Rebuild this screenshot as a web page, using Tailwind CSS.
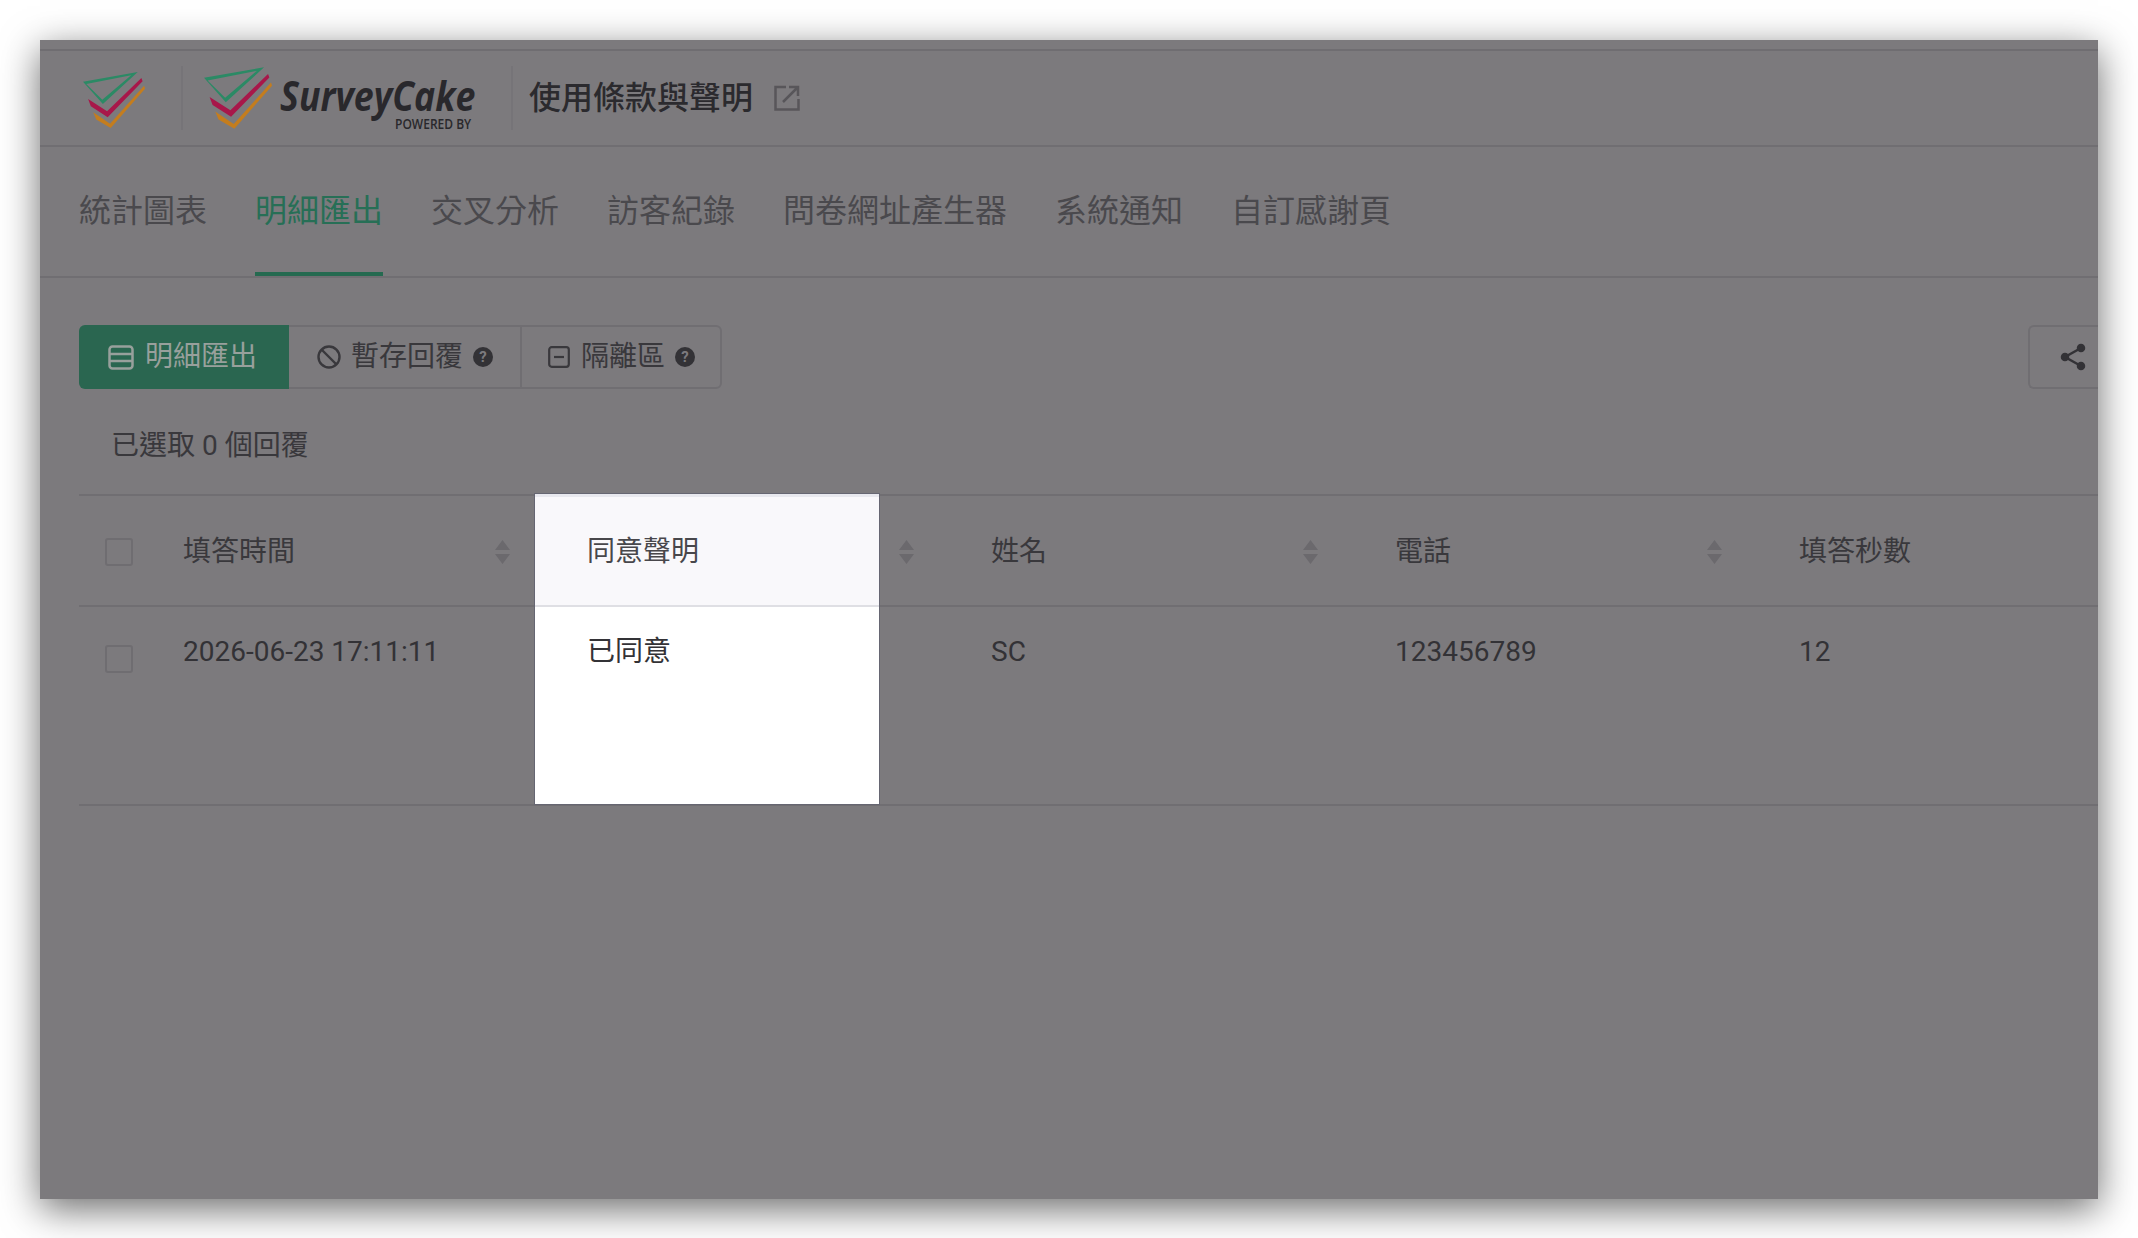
<!DOCTYPE html>
<html lang="zh-Hant">
<head>
    <meta charset="UTF-8">
    <title>使用條款與聲明</title>
    <script src="https://cdn.jsdelivr.net/npm/@tailwindcss/browser@4"></script>
</head>
<body class="w-[2138px] h-[1238px] overflow-hidden bg-white pt-[40px] pl-[40px] font-['Roboto','Noto_Sans_CJK_TC',sans-serif] text-[#39383c]">

    <svg class="hidden">
        <symbol id="logo-mark" viewBox="0 0 206 186">
            <path fill="#2b8a65" fill-rule="evenodd" d="M0 32 L182 0 L66 106 Z M11 40 L64 92 L160 11 Z"/>
            <path fill="#a8174a" d="M17 90 L80 130 L194 20 L198 31 L82 150 L26 114 Z"/>
            <path fill="#c47d1e" d="M34 134 L90 172 L203 46 L206 56 L92 186 L44 158 Z"/>
        </symbol>
    </svg>

    <div class="w-[2058px] h-[1159px] flex flex-col overflow-hidden bg-[#7c7a7d] shadow-[0_10px_36px_rgba(0,0,0,0.58)]">

        <div class="h-[11px] shrink-0 border-b-2 border-[#6f6d71]"></div>

        <!-- header -->
        <div class="h-[96px] shrink-0 flex items-center border-b-2 border-[#706e72] pl-[43px]">
            <svg class="w-[62px] h-[58px] shrink-0 mt-[4px]"><use href="#logo-mark"/></svg>
            <div class="w-[2px] h-[64px] ml-[36px] bg-[#767478]"></div>
            <svg class="w-[68px] h-[64px] ml-[21px] shrink-0 -mt-[1px]"><use href="#logo-mark"/></svg>
            <div class="relative w-[195px] h-[70px] ml-[8px] shrink-0">
                <span class="absolute left-0 top-[14px] origin-left scale-x-[0.85] font-['Open_Sans'] italic font-bold text-[42px] leading-[36px] text-[#29282c] whitespace-nowrap">SurveyCake</span>
                <span class="absolute right-[4px] top-[51px] origin-right scale-x-[0.8] font-['Open_Sans'] font-semibold text-[15px] leading-[18px] text-[#29282c] whitespace-nowrap">POWERED BY</span>
            </div>
            <div class="w-[2px] h-[64px] ml-[36px] bg-[#767478]"></div>
            <h1 class="ml-[16px] text-[32px] font-medium leading-none text-[#2b2a2e]">使用條款與聲明</h1>
            <svg class="w-[26px] h-[26px] ml-[21px]" viewBox="0 0 26 26" fill="none" stroke="#58565a" stroke-width="2.5">
                <path d="M12 2 H1.5 V24.5 H24.5 V14"/>
                <path d="M9 17 L23 3 M15 2 H24 V11"/>
            </svg>
        </div>

        <!-- tabs -->
        <div class="h-[131px] shrink-0 flex gap-[48px] border-b-2 border-[#706e72] pl-[39px] text-[32px] text-[#4a494d]">
            <div class="flex items-center pb-[2px]">統計圖表</div>
            <div class="flex items-center pt-[2px] border-b-4 border-[#256a50] text-[#276f56]">明細匯出</div>
            <div class="flex items-center pb-[2px]">交叉分析</div>
            <div class="flex items-center pb-[2px]">訪客紀錄</div>
            <div class="flex items-center pb-[2px]">問卷網址產生器</div>
            <div class="flex items-center pb-[2px]">系統通知</div>
            <div class="flex items-center pb-[2px]">自訂感謝頁</div>
        </div>

        <!-- toolbar -->
        <div class="flex justify-between pl-[39px] pt-[47px] text-[28px]">
            <div class="flex h-[64px]">
                <div class="w-[210px] flex items-center bg-[#2a6650] rounded-l-md pl-[29px] text-[#98a09c]">
                    <svg class="w-[26px] h-[25px]" viewBox="0 0 26 25" fill="none" stroke="#98a09c" stroke-width="2.5">
                        <rect x="1.5" y="1.5" width="23" height="22" rx="3"/>
                        <path d="M1.5 9 H24.5 M1.5 16 H24.5"/>
                    </svg>
                    <span class="ml-[11px]">明細匯出</span>
                </div>
                <div class="w-[231px] flex items-center border-y-2 border-[#706e72] pl-[28px]">
                    <svg class="w-[24px] h-[24px]" viewBox="0 0 24 24" fill="none" stroke="#39383c" stroke-width="2.4">
                        <circle cx="12" cy="12" r="10.5"/>
                        <path d="M5 5 L19 19"/>
                    </svg>
                    <span class="ml-[10px]">暫存回覆</span>
                    <span class="ml-[10px] w-[20px] h-[20px] rounded-full bg-[#333236] text-[#7c7a7e] text-[15px] font-bold flex items-center justify-center">?</span>
                </div>
                <div class="w-[202px] flex items-center border-y-2 border-r-2 border-l-2 border-[#706e72] rounded-r-md pl-[26px]">
                    <svg class="w-[22px] h-[22px]" viewBox="0 0 22 22" fill="none" stroke="#39383c" stroke-width="2.2">
                        <rect x="1.2" y="1.2" width="19.6" height="19.6" rx="2.5"/>
                        <path d="M6 11 H16"/>
                    </svg>
                    <span class="ml-[11px]">隔離區</span>
                    <span class="ml-[10px] w-[20px] h-[20px] rounded-full bg-[#333236] text-[#7c7a7e] text-[15px] font-bold flex items-center justify-center">?</span>
                </div>
            </div>
            <div class="w-[70px] h-[64px] flex items-center border-y-2 border-l-2 border-[#706e72] rounded-l-md pl-[30px]">
                <svg class="w-[26px] h-[28px]" viewBox="0 0 26 28" fill="#333236" stroke="#333236" stroke-width="2.5">
                    <path d="M21 5 L5 14 L21 23" fill="none"/>
                    <circle cx="21" cy="5" r="3"/>
                    <circle cx="5" cy="14" r="3"/>
                    <circle cx="21" cy="23" r="3"/>
                </svg>
            </div>
        </div>

        <div class="h-[40px] mt-[37px] pl-[71px] text-[28px] leading-[40px]">已選取 0 個回覆</div>

        <!-- table -->
        <div class="relative ml-[39px] mt-[28px] text-[28px]">
            <div class="grid grid-cols-[51px_404px_404px_404px_404px_1fr] h-[113px] pt-[2px] items-center border-y-2 border-[#706e72]">
                <div class="pl-[26px]"><div class="w-[28px] h-[28px] border-2 border-[#6f6d71] rounded-[3px]"></div></div>
                <div class="flex items-center justify-between pl-[53px] pr-[23px]">填答時間
                    <svg class="w-[17px] h-[24px]" viewBox="0 0 17 24" fill="#6b696d"><path d="M8.5 0 L16 10 H1 Z M8.5 24 L1 14 H16 Z"/></svg>
                </div>
                <div class="flex items-center justify-end pr-[23px]">
                    <svg class="w-[17px] h-[24px]" viewBox="0 0 17 24" fill="#6b696d"><path d="M8.5 0 L16 10 H1 Z M8.5 24 L1 14 H16 Z"/></svg>
                </div>
                <div class="flex items-center justify-between pl-[53px] pr-[23px]">姓名
                    <svg class="w-[17px] h-[24px]" viewBox="0 0 17 24" fill="#6b696d"><path d="M8.5 0 L16 10 H1 Z M8.5 24 L1 14 H16 Z"/></svg>
                </div>
                <div class="flex items-center justify-between pl-[53px] pr-[23px]">電話
                    <svg class="w-[17px] h-[24px]" viewBox="0 0 17 24" fill="#6b696d"><path d="M8.5 0 L16 10 H1 Z M8.5 24 L1 14 H16 Z"/></svg>
                </div>
                <div class="pl-[53px]">填答秒數</div>
            </div>
            <div class="grid grid-cols-[51px_404px_404px_404px_404px_1fr] h-[199px] border-b-2 border-[#706e72] pt-[26px] text-[#333236]">
                <div class="pl-[26px] pt-[12px]"><div class="w-[28px] h-[28px] border-2 border-[#6f6d71] rounded-[3px]"></div></div>
                <div class="pl-[53px] leading-[38px]">2026-06-23 17:11:11</div>
                <div></div>
                <div class="pl-[53px] leading-[38px]">SC</div>
                <div class="pl-[53px] leading-[38px]">123456789</div>
                <div class="pl-[53px] leading-[38px]">12</div>
            </div>

            <!-- highlighted column over the dimmed table -->
            <div class="absolute left-[455px] -top-[1px] w-[346px] h-[312px] flex flex-col bg-white border border-[#666672]">
                <div class="h-[113px] shrink-0 flex items-center pl-[52px] pt-[2px] bg-[#f9f8fb] border-t-[3px] border-b-2 border-t-[#e8e8ee] border-b-[#dfdfe4] text-[#48474b]">同意聲明</div>
                <div class="pl-[52px] pt-[26px] leading-[38px] text-[#333236]">已同意</div>
            </div>
        </div>
    </div>
</body>
</html>
